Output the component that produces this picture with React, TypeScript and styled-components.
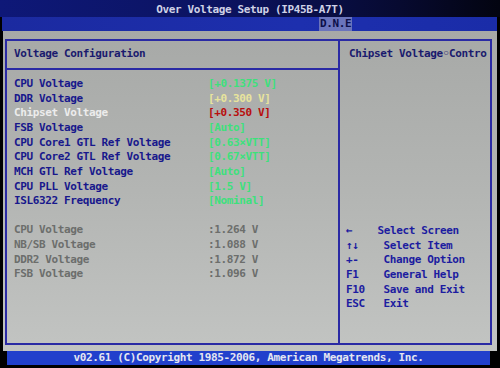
import { FC } from "react";
import styled, { createGlobalStyle } from "styled-components";

const ROW = "14.64px";

const GlobalStyle = createGlobalStyle`
  html, body {
    margin: 0;
    padding: 0;
    background: #000;
  }
  body {
    font-family: "DejaVu Sans Mono", "Liberation Mono", monospace;
    font-size: 11px;
    letter-spacing: -0.37px;
    font-weight: bold;
  }
`;

type Tone = "green" | "yellow" | "red";

const settings: { label: string; value: string; tone: Tone; selected?: boolean }[] = [
  { label: "CPU Voltage", value: "[+0.1375 V]", tone: "green" },
  { label: "DDR Voltage", value: "[+0.300 V]", tone: "yellow" },
  { label: "Chipset Voltage", value: "[+0.350 V]", tone: "red", selected: true },
  { label: "FSB Voltage", value: "[Auto]", tone: "green" },
  { label: "CPU Core1 GTL Ref Voltage", value: "[0.63×VTT]", tone: "green" },
  { label: "CPU Core2 GTL Ref Voltage", value: "[0.67×VTT]", tone: "green" },
  { label: "MCH GTL Ref Voltage", value: "[Auto]", tone: "green" },
  { label: "CPU PLL Voltage", value: "[1.5 V]", tone: "green" },
  { label: "ISL6322 Frequency", value: "[Nominal]", tone: "green" },
];

const readings = [
  { label: "CPU Voltage", value: ":1.264 V" },
  { label: "NB/SB Voltage", value: ":1.088 V" },
  { label: "DDR2 Voltage", value: ":1.872 V" },
  { label: "FSB Voltage", value: ":1.096 V" },
];

const help = [
  { key: "←", text: "Select Screen", tight: true },
  { key: "↑↓", text: "Select Item" },
  { key: "+-", text: "Change Option" },
  { key: "F1", text: "General Help" },
  { key: "F10", text: "Save and Exit" },
  { key: "ESC", text: "Exit" },
];

const App: FC = () => {
  return (
    <>
      <GlobalStyle />
      <Screen>
        <TitleBar>Over Voltage Setup (IP45B-A7T)</TitleBar>
        <MenuBar>
          <MenuTab>D.N.E</MenuTab>
        </MenuBar>
        <Body>
          <Frame>
            <LeftPanel>
              <Heading>Voltage Configuration</Heading>
              <Divider />
              <SettingList>
                {settings.map((s) => (
                  <SettingRow key={s.label}>
                    <Label $selected={s.selected}>{s.label}</Label>
                    <Value $tone={s.tone}>{s.value}</Value>
                  </SettingRow>
                ))}
              </SettingList>
              <ReadingList>
                {readings.map((r) => (
                  <SettingRow key={r.label}>
                    <Reading>{r.label}</Reading>
                    <Reading>{r.value}</Reading>
                  </SettingRow>
                ))}
              </ReadingList>
            </LeftPanel>
            <RightPanel>
              <Heading>Chipset Voltage◦Contro</Heading>
              <HelpList>
                {help.map((h) => (
                  <HelpRow key={h.key}>
                    <HelpKey>{h.key}</HelpKey>
                    <HelpText $tight={h.tight}>{h.text}</HelpText>
                  </HelpRow>
                ))}
              </HelpList>
            </RightPanel>
          </Frame>
        </Body>
        <Footer>
          <FooterBand>v02.61 (C)Copyright 1985-2006, American Megatrends, Inc.</FooterBand>
        </Footer>
      </Screen>
    </>
  );
};

export default App;

const Screen = styled.div`
  width: 500px;
  height: 368px;
  background: #000;
  display: flex;
  flex-direction: column;
  overflow: hidden;
`;

const TitleBar = styled.div`
  height: 15px;
  padding-top: 2px;
  line-height: 15px;
  text-align: center;
  color: #cfd2e6;
  background: linear-gradient(90deg, #0e1878 0%, #0b1360 45%, #070a30 80%, #030410 100%);
`;

const MenuBar = styled.div`
  height: 14px;
  margin: 0 3px 0 2px;
  display: flex;
  padding-left: 317px;
  background: linear-gradient(90deg, #1b2aa0 0%, #1d2fae 60%, #1a2ca8 100%);
`;

const MenuTab = styled.div`
  width: 32px;
  line-height: 14px;
  color: #0c0f48;
  background: #6a74bc;
  padding-left: 1px;
`;

const Body = styled.div`
  height: 320px;
  margin: 0 3px;
  box-sizing: border-box;
  padding: 8px 5px 6px 2px;
  background: linear-gradient(180deg, #a7a9a7 0%, #b3b5b3 50%, #c2c4c2 100%);
`;

const Frame = styled.div`
  height: 100%;
  box-sizing: border-box;
  border: 2px solid #2a2aa4;
  display: grid;
  grid-template-columns: 333px 1fr;
`;

const LeftPanel = styled.div`
  border-right: 2px solid #2a2aa4;
  padding: 6px 0 0 7px;
  line-height: ${ROW};
`;

const RightPanel = styled.div`
  padding: 6px 0 0 9px;
  line-height: ${ROW};
`;

const Heading = styled.div`
  color: #1a1a6e;
  height: ${ROW};
  white-space: nowrap;
`;

const Divider = styled.div`
  height: 15.5px;
  margin-left: -7px;
  display: flex;
  align-items: center;
  &::after {
    content: "";
    flex: 1;
    height: 2px;
    background: #2a2aa4;
  }
`;

const SettingList = styled.div`
  display: flex;
  flex-direction: column;
`;

const ReadingList = styled(SettingList)`
  margin-top: ${ROW};
`;

const SettingRow = styled.div`
  display: grid;
  grid-template-columns: 194px 1fr;
  height: ${ROW};
  white-space: nowrap;
`;

const Label = styled.span<{ $selected?: boolean }>`
  color: ${(p) => (p.$selected ? "#ececec" : "#18188c")};
`;

const toneColor: Record<Tone, string> = {
  green: "#3ee07c",
  yellow: "#e8e49c",
  red: "#b80e0e",
};

const Value = styled.span<{ $tone: Tone }>`
  color: ${(p) => toneColor[p.$tone]};
`;

const Reading = styled.span`
  color: #6c6e6c;
`;

const HelpList = styled.div`
  margin-top: calc(11 * ${ROW} + 1.5px);
  margin-left: -3px;
  display: flex;
  flex-direction: column;
`;

const HelpRow = styled.div`
  display: grid;
  grid-template-columns: 37.5px 1fr;
  height: ${ROW};
  white-space: nowrap;
  color: #1c1ca0;
`;

const HelpKey = styled.span``;

const HelpText = styled.span<{ $tight?: boolean }>`
  margin-left: ${(p) => (p.$tight ? "-6px" : "0")};
`;

const Footer = styled.div`
  height: 17px;
  padding: 0 10px 0 7px;
`;

const FooterBand = styled.div`
  height: 14px;
  line-height: 14px;
  text-align: center;
  color: #e4e6f2;
  background: #2140cc;
  white-space: nowrap;
`;
